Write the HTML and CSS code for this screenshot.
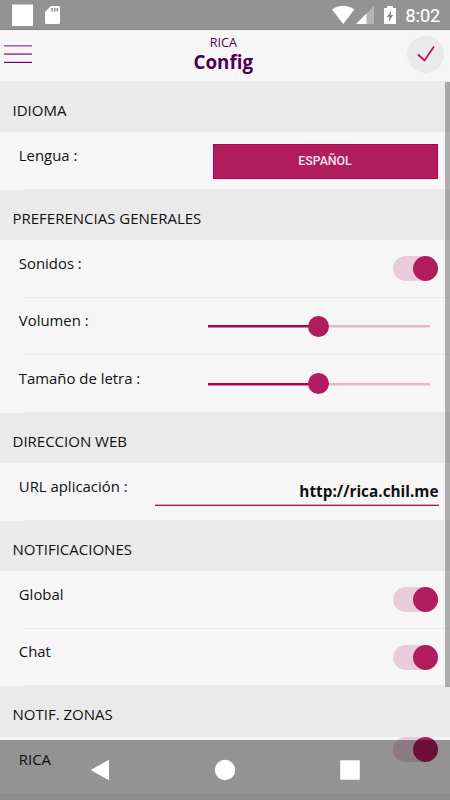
FILE: index.html
```html
<!DOCTYPE html>
<html lang="es">
<head>
<meta charset="utf-8">
<title>Config</title>
<link rel="stylesheet" href="styles.css">
</head>
<body>
<div class="screen">
  <div class="status">
    <svg class="status-left" width="80" height="30" viewBox="0 0 80 30"><rect x="12" y="4.500" width="21" height="21.500" fill="#fff"/><path d="M51 6h7.500q1.500 0 1.500 1.500v15q0 1.500-1.500 1.500h-12q-1.500 0-1.500-1.500V12z" fill="#fff"/><path d="M52 8v3.500M54.700 8v3.500M57.400 8v3.500" stroke="#939393" stroke-width="1.600"/></svg>
    <svg class="status-right" width="75" height="30" viewBox="0 0 75 30"><path d="M0 9.500Q11.200 2 22.400 9.500L11.200 24z" fill="#fff"/><path d="M42 6v18H24z" fill="#b5b5b5"/><path d="M34.500 13.500V24H24z" fill="#fff"/><path d="M52 8h3V6h6v2h3v16H52z" fill="#fff"/><path d="M59.500 10l-4.500 7h2.500l-.8 5 4.500-7h-2.600z" fill="#858585"/></svg>
    <span class="clock">8:02</span>
  </div>
  <header class="bar">
    <svg class="menu" width="28" height="20" viewBox="0 0 28 20"><path d="M0 1.800h28" stroke="#a070a0" stroke-width="1.700"/><path d="M0 10.100h28" stroke="#8b3a8b" stroke-width="1.500"/><path d="M0 18.400h28" stroke="#760076" stroke-width="1.200"/></svg>
    <div class="titles"><div class="sub">RICA</div><div class="title">Config</div></div>
    <div class="check"><svg width="37" height="37" viewBox="0 0 37 37"><path d="M11 18.500l6.500 6L27 10.500" fill="none" stroke="#b4145a" stroke-width="1.800"/></svg></div>
  </header>
  <main class="list">
    <h2 class="section">IDIOMA</h2>
    <div class="row"><span class="label">Lengua :</span><button class="button">ESPAÑOL</button></div>
    <h2 class="section">PREFERENCIAS GENERALES</h2>
    <div class="row"><span class="label">Sonidos :</span><span class="toggle"></span></div>
    <div class="row"><span class="label">Volumen :</span><span class="slider"><i class="thumb"></i></span></div>
    <div class="row"><span class="label">Tamaño de letra :</span><span class="slider"><i class="thumb"></i></span></div>
    <h2 class="section">DIRECCION WEB</h2>
    <div class="row"><span class="label">URL aplicación :</span><span class="url">http://rica.chil.me</span></div>
    <h2 class="section">NOTIFICACIONES</h2>
    <div class="row"><span class="label">Global</span><span class="toggle"></span></div>
    <div class="row"><span class="label">Chat</span><span class="toggle"></span></div>
    <h2 class="section">NOTIF. ZONAS</h2>
    <div class="row"><span class="label">RICA</span><span class="toggle toggle-top"></span></div>
    <h2 class="section"></h2>
  </main>
  <div class="scrollbar"></div>
  <nav class="nav"><svg width="450" height="60" viewBox="0 0 450 60"><path d="M91.500 30L108.500 20.500V39.500z" fill="#fff" stroke="#fff" stroke-width="1" stroke-linejoin="round"/><circle cx="225" cy="30" r="10.200" fill="#fff"/><rect x="340.200" y="20.200" width="19.600" height="19.600" rx="1" fill="#fff"/></svg></nav>
</div>
</body>
</html>
```
FILE: styles.css
```css
* { box-sizing: border-box; }
body { margin: 0; background: #f6f6f6; }
.screen {
  position: relative;
  width: 450px;
  height: 800px;
  overflow: hidden;
  background: #f6f6f6;
  font-family: "Open Sans", sans-serif;
  font-size: 15px;
  color: #111;
}
.status {
  display: flex;
  height: 30px;
  background: #939393;
  border-bottom: 1px solid #858585;
}
.status-left { flex: none; }
.status-right { flex: none; margin-left: 252px; }
.clock {
  margin-left: -1.500px;
  font: 400 18px/31px Roboto, sans-serif;
  color: #fff;
  -webkit-text-stroke: 0.2px #fff;
}
.bar {
  display: flex;
  align-items: flex-start;
  justify-content: space-between;
  height: 51px;
  padding: 0 6.500px 0 4px;
  background: #f6f6f6;
}
.menu { flex: none; margin-top: 14px; }
.titles {
  width: 100px;
  margin-left: 8px;
  color: #500050;
  text-align: center;
}
.sub { padding-top: 4px; font-size: 12.600px; line-height: 17px; }
.title { font-size: 18.800px; font-weight: 700; line-height: 23px; }
.check {
  width: 37px;
  height: 37px;
  margin-top: 5.500px;
  border-radius: 50%;
  background: #eaeaea;
}
.check svg { display: block; }
.section {
  height: 50.5px;
  margin: 0;
  padding: 18px 12.500px 0;
  background: #eaeaea;
  font-size: 15px;
  font-weight: 400;
  line-height: 20px;
  white-space: nowrap;
}
.list { height: 719px; padding-top: 0.9px; background: #eaeaea; }
.row {
  display: flex;
  justify-content: space-between;
  height: 57.500px;
  padding: 0 12.500px 0 18.800px;
  background: linear-gradient(#ededed, #ededed) 24px 100% / 100% 1px no-repeat #f6f6f6;
}
.label {
  padding-top: 12.500px;
  font-size: 14.900px;
  line-height: 20px;
  white-space: nowrap;
}
.button {
  width: 225px;
  height: 35px;
  margin-top: 11.500px;
  padding: 0;
  border: 1px solid #b40052;
  background: #b11c5d;
  color: #f8e4ed;
  font: 500 12.300px/33px Roboto, sans-serif;
}
.toggle {
  display: flex;
  justify-content: flex-end;
  width: 45px;
  height: 25px;
  margin-top: 16px;
  border-radius: 13px;
  background: #e9ccd9;
}
.toggle-top { margin-top: 0; }
.toggle::after {
  content: "";
  width: 25px;
  height: 25px;
  border-radius: 50%;
  background: #b11c5d;
}
.slider {
  display: flex;
  align-items: center;
  justify-content: center;
  width: 222px;
  height: 22px;
  margin: 17.600px 7.500px 0 0;
  background: linear-gradient(90deg, #b00050 50%, #e4b8cb 50%) 0 50% / 100% 2.500px no-repeat;
}
.thumb {
  width: 21px;
  height: 21px;
  margin-right: 1px;
  border-radius: 50%;
  background: #b11c5d;
}
.url {
  width: 284px;
  height: 31.500px;
  margin: 11px -1px 0 0;
  padding-top: 7px;
  background: linear-gradient(#d9a3bc 50%, #b01a5c 50%) 0 100% / 100% 2px no-repeat;
  font-size: 15.350px;
  font-weight: 700;
  line-height: 20px;
  text-align: right;
}
.scrollbar {
  position: absolute;
  right: 0;
  top: 82px;
  width: 5px;
  height: 605px;
  background: rgba(0, 0, 0, 0.29);
}
.nav {
  position: absolute;
  left: 0;
  bottom: 0;
  width: 450px;
  height: 60px;
  background: rgba(0, 0, 0, 0.4);
}
.nav svg { display: block; }
```
